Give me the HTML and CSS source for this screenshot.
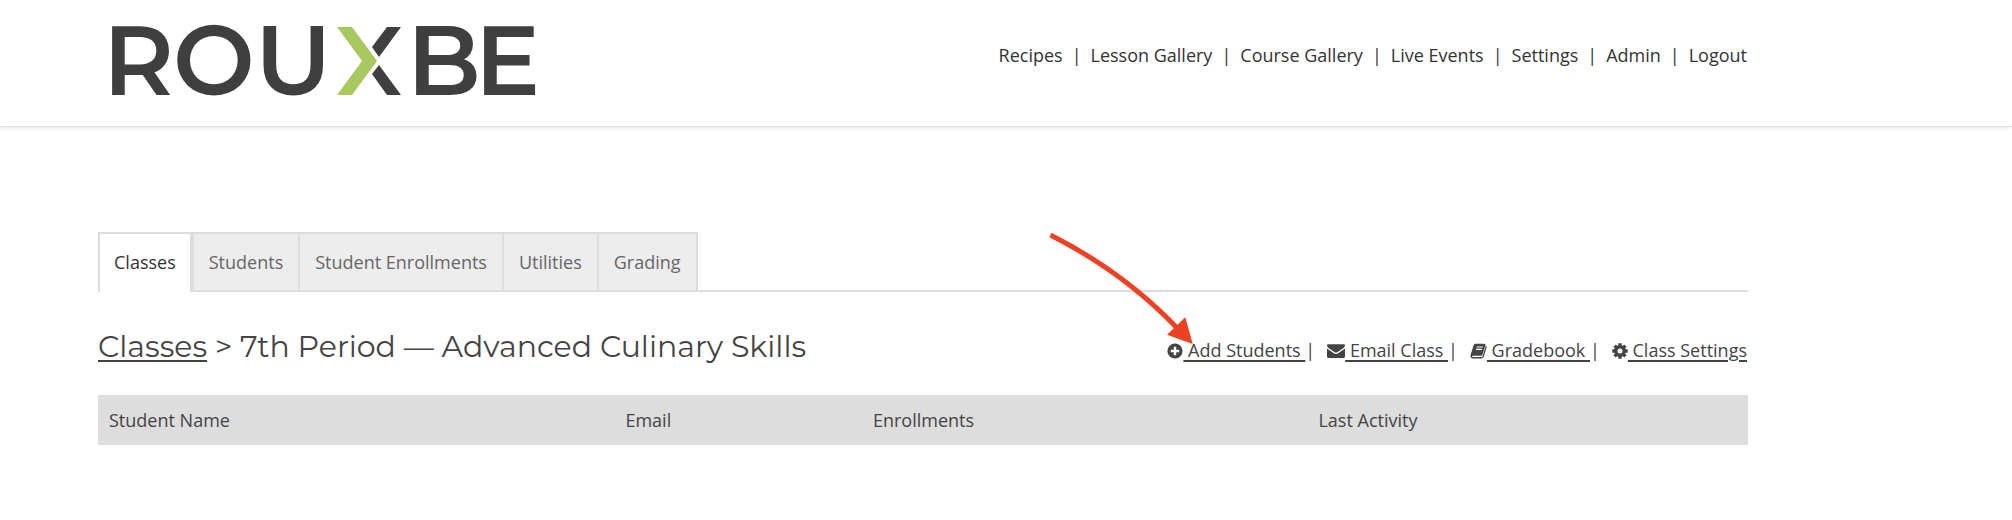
FILE: index.html
```
<!DOCTYPE html>
<html lang="en">
<head>
<meta charset="utf-8">
<title>Rouxbe – Classes</title>
<link rel="stylesheet" href="styles.css">
</head>
<body>
<header class="site-header">
  <a class="logo" href="#" aria-label="Rouxbe">
    <svg width="424" height="74" viewBox="0 0 424 74">
      <text class="logo-text" x="-9 61 143" y="71">ROU</text>
      <path fill="#a8c860" d="M225 3h15l25 34-25 34h-15l25-34z"/>
      <path fill="#3f3f3f" d="M275 3h14l-22 30-7-10zM267 41l22 30h-14l-15-21z"/>
      <text class="logo-text" x="295 363" y="71">BE</text>
    </svg>
  </a>
  <nav class="main-nav">
    <a href="#">Recipes</a><span>|</span>
    <a href="#">Lesson Gallery</a><span>|</span>
    <a href="#">Course Gallery</a><span>|</span>
    <a href="#">Live Events</a><span>|</span>
    <a href="#">Settings</a><span>|</span>
    <a href="#">Admin</a><span>|</span>
    <a href="#">Logout</a>
  </nav>
</header>
<main class="content">
  <nav class="tabs">
    <a class="tab tab-active" href="#">Classes</a>
    <a class="tab" href="#">Students</a>
    <a class="tab" href="#">Student Enrollments</a>
    <a class="tab" href="#">Utilities</a>
    <a class="tab" href="#">Grading</a>
  </nav>
  <div class="title-row">
    <h1 class="title"><a href="#">Classes</a> &gt; 7th Period — Advanced Culinary Skills</h1>
    <div class="actions">
      <span class="action"><a href="#"><svg class="icon" width="16" height="16" viewBox="0 0 16 16"><circle cx="8" cy="8" r="7.6" fill="#444"/><path d="M8 3.8v8.4M3.8 8h8.4" stroke="#fff" stroke-width="2.4"/></svg> Add Students </a>|
        <svg class="arrow" width="150" height="118" viewBox="0 0 150 118"><path d="M4.500 6Q78.500 43.500 132 100" fill="none" stroke="#ee4023" stroke-width="5"/><path d="M146.700 115l-7.400-26.700L121 105.700z" fill="#ee4023"/></svg></span>
      <span class="action"><a href="#"><svg class="icon" width="18" height="16" viewBox="0 0 18 16"><path d="M0 2.600Q0 1.300 1.400 1.300h15.200Q18 1.300 18 2.600q0 1.200-1.500 2.300L10.300 9.200q-1.300.8-2.600 0L1.500 4.900Q0 3.800 0 2.600zM0 5.600l6.800 4.700q2.200 1.400 4.400 0L18 5.600v7.900q0 1.500-1.500 1.500h-15Q0 15 0 13.500z" fill="#444"/></svg> Email Class </a>|</span>
      <span class="action"><a href="#"><svg class="icon" width="17" height="16" viewBox="0 0 17 16"><path d="M5.500.7h8.800q1.500 0 1.100 1.500l-2.800 9.300q-.4 1.300-1.700 1.300H3q-1 0-.9.700.1.600 1 .6h8.300q.9 0 1.200-.9L15.500 4l.2-1.400q1.300.4.9 1.700l-2.700 9.300q-.6 1.800-2.500 1.800H3Q.8 15.400.4 13.200q-.1-.8.300-1.600L3.500 2.500Q4 .7 5.500.7z" fill="#444"/><path d="M6.700 4h6M6 6.400h6" stroke="#fff" stroke-width="1.100"/></svg> Gradebook </a>|</span>
      <span class="action"><a href="#"><svg class="icon" width="16" height="16" viewBox="0 0 16 16"><g stroke="#444" stroke-width="3.400"><path d="M8 .3v15.400M.3 8h15.400M2.600 2.600l10.800 10.800M13.400 2.600L2.600 13.400"/></g><circle cx="8" cy="8" r="5.900" fill="#444"/><circle cx="8" cy="8" r="2.500" fill="#fff"/></svg> Class Settings</a></span>
    </div>
  </div>
  <table class="students">
    <thead>
      <tr><th class="col-name">Student Name</th><th class="col-email">Email</th><th class="col-enroll">Enrollments</th><th>Last Activity</th></tr>
    </thead>
  </table>
</main>
</body>
</html>
```
FILE: styles.css
```
* { box-sizing: border-box; }
body {
  margin: 0;
  background: #fff;
  color: #444;
  font-family: "Open Sans", "Noto Sans", sans-serif;
  font-size: 18px;
  line-height: 24px;
}
a { color: inherit; }
.site-header {
  display: flex;
  justify-content: space-between;
  align-items: flex-start;
  padding: 24px 265px 28px 112px;
  border-bottom: 1px solid #e0e0e0;
  box-shadow: 0 1px 4px rgba(0, 0, 0, 0.1);
}
.logo svg { display: block; overflow: visible; }
.logo-text {
  font-family: Montserrat, Lato, sans-serif;
  font-weight: 600;
  font-size: 97px;
  fill: #3f3f3f;
}
.main-nav {
  display: flex;
  gap: 9px;
  padding-top: 19px;
  color: #333;
}
.main-nav a { text-decoration: none; }
.content { padding: 105px 264px 0 98px; }
.tabs {
  display: flex;
  border-bottom: 2px solid #ddd;
}
.tab {
  padding: 16px 15px;
  border: 2px solid #ddd;
  border-width: 2px 2px 0 0;
  background: #ededed;
  color: #666;
  text-decoration: none;
}
.tab-active {
  margin-bottom: -2px;
  padding-left: 14px;
  padding-right: 14px;
  border-width: 2px 4px 0 2px;
  border-bottom-right-radius: 3px;
  background: #fff;
  color: #333;
}
.title-row {
  display: flex;
  justify-content: space-between;
  align-items: baseline;
  padding: 35px 1px 28px 0;
}
.title {
  margin: 0;
  font-family: Montserrat, Inter, sans-serif;
  font-size: 30px;
  font-weight: 400;
  line-height: 40px;
}
.title a, .actions a {
  text-decoration-thickness: 2px;
  text-underline-offset: 3px;
}
.actions {
  display: flex;
  gap: 12px;
}
.action { position: relative; }
.icon { vertical-align: -2px; }
.arrow {
  position: absolute;
  left: -121px;
  top: -109px;
}
.students {
  width: 100%;
  border-collapse: collapse;
  table-layout: fixed;
  background: #ddd;
}
.students th {
  padding: 13px 11px;
  font-weight: 400;
  text-align: left;
}
.col-name { width: 31.3%; }
.col-email { width: 15%; }
.col-enroll { width: 27%; }
```
